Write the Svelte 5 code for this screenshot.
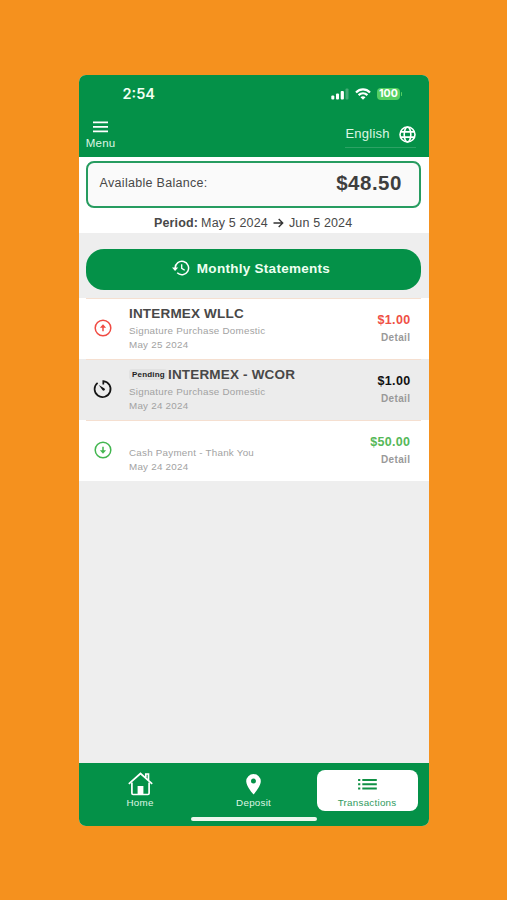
<script>
  const transactions = [
    { kind: 'debit', name: 'INTERMEX WLLC', note: 'Signature Purchase Domestic', date: 'May 25 2024', amount: '$1.00' },
    { kind: 'pending', name: 'INTERMEX - WCOR', note: 'Signature Purchase Domestic', date: 'May 24 2024', amount: '$1.00' },
    { kind: 'credit', name: '', note: 'Cash Payment - Thank You', date: 'May 24 2024', amount: '$50.00' }
  ];
</script>

<div class="stage">
  <main class="phone">
    <header>
      <div class="status">
        <span class="time">2:54</span>
        <div class="indicators">
          <svg class="signal" width="19" height="12" viewBox="0 0 19 12" fill="#fff">
            <rect x="0.3" y="7.5" width="3" height="4" rx="1" />
            <rect x="5" y="5.5" width="3" height="6" rx="1" />
            <rect x="9.7" y="3" width="3.2" height="8.5" rx="1" />
            <rect x="14.5" y="0.5" width="3" height="11" rx="1" opacity=".25" />
          </svg>
          <svg class="wifi" width="16" height="12" viewBox="0 0 16 12" fill="none" stroke="#fff" stroke-width="2.2">
            <path d="M1 4.4C5 .3 11 .3 15 4.4M3.6 7.1c2.5-2.5 6.3-2.5 8.8 0" />
            <path d="M8 11.8 5.500 9.200c1.400-1.300 3.600-1.300 5 0Z" fill="#fff" stroke="none" />
          </svg>
          <span class="battery">100</span><i class="tip"></i>
        </div>
      </div>
      <div class="toolbar">
        <div class="menu">
          <svg width="15" height="12" viewBox="0 0 15 12" fill="#fff"><path d="M0 .4h15v1.800H0zM0 4.900h15v1.800H0zM0 9.400h15v1.800H0z" /></svg>
          <span>Menu</span>
        </div>
        <div class="language">
          <span>English</span>
          <svg width="17" height="17" viewBox="0 0 17 17" fill="none" stroke="#fff" stroke-width="1.600">
            <circle cx="8.500" cy="8.500" r="7.500" />
            <ellipse cx="8.500" cy="8.500" rx="3.300" ry="7.500" />
            <path d="M1.600 5.900h13.800M1.600 11.100h13.800" />
          </svg>
        </div>
      </div>
    </header>

    <section class="summary">
      <div class="balance"><span>Available Balance:</span><strong>$48.50</strong></div>
      <div class="period">
        <b>Period:</b><span class="from">May 5 2024</span>
        <svg width="11" height="10" viewBox="0 0 11 10" fill="none" stroke="#333" stroke-width="1.400"><path d="M.5 5h9M5.700 1l4 4-4 4" /></svg>
        <span class="to">Jun 5 2024</span>
      </div>
    </section>

    <button class="statements">
      <svg width="18" height="16" viewBox="0 0 18 16" fill="none" stroke="#fff" stroke-width="1.500">
        <path d="M3.200 8a6.700 6.700 0 1 1 2 4.800" />
        <path d="M0 7.600h6.200L3.100 10.900Z" fill="#fff" stroke="none" />
        <path d="M9.700 4.300v4.100l3 1.900" stroke-width="1.300" />
      </svg>
      Monthly Statements
    </button>

    <section class="list">
      {#each transactions as t}
        <article class={t.kind}>
          <div class="icon">
            {#if t.kind === 'pending'}
              <svg width="20" height="20" viewBox="0 0 20 20" fill="none" stroke="#151515" stroke-width="1.700">
                <path d="M10.300 5.400V2.100a8 8 0 1 1-5.700 1.700" />
                <path d="M5.800 5.900 11.500 9.400a1.300 1.300 0 0 1-1.900 1.900Z" fill="#111" stroke="none" />
              </svg>
            {:else}
              <svg width="18" height="18" viewBox="0 0 18 18" fill="none" stroke="currentColor" stroke-width="1.500">
                <circle cx="9" cy="9" r="7.800" />
                {#if t.kind === 'debit'}
                  <path d="M9 12.200V7" /><path d="M5.900 8.800 9 5.300l3.100 3.500Z" fill="currentColor" stroke="none" />
                {:else}
                  <path d="M9 5.700V11" /><path d="M5.900 9.200 9 12.700l3.100-3.500Z" fill="currentColor" stroke="none" />
                {/if}
              </svg>
            {/if}
          </div>
          <div class="description">
            <h2>{#if t.kind === 'pending'}<span class="tag">Pending</span>{/if}{t.name}</h2>
            <p>{t.note}</p>
            <p>{t.date}</p>
          </div>
          <div class="value"><strong>{t.amount}</strong><span>Detail</span></div>
        </article>
      {/each}
    </section>

    <footer>
      <nav>
        <div class="tab">
          <svg width="25" height="24" viewBox="0 0 25 24" fill="none" stroke="#fff" stroke-width="1.700">
            <path d="M.8 11.900 12.500 1.500l11.700 10.400" />
            <path d="M17.800 5.500V2h2.700v6" />
            <path d="M3.900 10.500v10.800q0 1.200 1.200 1.200h14.800q1.200 0 1.200-1.200V10.500" />
            <path d="M9.600 22.500v-8.400h5.800v8.400Z" fill="#fff" stroke="none" />
          </svg>
          <span>Home</span>
        </div>
        <div class="tab">
          <svg width="25" height="24" viewBox="0 0 25 24"><path fill="#fff" fill-rule="evenodd" d="M12.500 2a7.300 7.300 0 0 0-7.300 7.300c0 5.200 7.300 13.200 7.300 13.200s7.300-8 7.300-13.200A7.300 7.300 0 0 0 12.500 2Zm0 4.600a2.500 2.500 0 1 1 0 5 2.500 2.500 0 0 1 0-5Z" /></svg>
          <span>Deposit</span>
        </div>
        <div class="tab active">
          <svg width="25" height="24" viewBox="0 0 25 24" fill="#109044"><path d="M3.100 7h2.200v2H3.100zM7.300 7h14.500v2H7.300zM3.100 11.200h2.200v2H3.100zM7.300 11.200h14.500v2H7.300zM3.100 15.400h2.200v2H3.100zM7.300 15.400h14.500v2H7.300z" /></svg>
          <span>Transactions</span>
        </div>
      </nav>
      <div class="handle"></div>
    </footer>
  </main>
</div>

<style>
  :global(body) { background: #f5911e; }
  * { box-sizing: border-box; }
  .stage {
    width: 507px; height: 900px; padding: 74.600px 0 0 78.600px; background: #f5911e;
    font-family: "Liberation Sans", Arial, sans-serif; color: #484848;
  }
  .phone {
    width: 350.800px; height: 751.700px; display: flex; flex-direction: column;
    background: #eee; border-radius: 7px; overflow: hidden;
  }
  svg { display: block; flex: none; }
  header { height: 82px; flex: none; background: #049148; color: #fff; }
  .status { height: 38px; display: flex; justify-content: space-between; padding: 0 27.500px 0 43.900px; align-items: center; }
  .time { font: 600 14.500px Inter, sans-serif; color: #f1fff3; }
  .indicators { display: flex; align-items: center; }
  .wifi { margin-left: 5px; }
  .battery {
    margin-left: 6px; width: 23px; height: 12px; border-radius: 4px; background: #55cf62;
    font: 700 10.500px/12px Inter, sans-serif; text-align: center;
  }
  .tip { width: 1px; height: 4px; margin-left: 1px; background: #55cf62; border-radius: 1px; }
  .toolbar { height: 44px; display: flex; justify-content: space-between; padding: 0 13px 0 7px; }
  .menu { width: 30px; padding-top: 8px; display: flex; flex-direction: column; align-items: center; }
  .menu span { font-size: 11.500px; line-height: 13px; letter-spacing: .2px; margin-top: 4px; color: #def6e4; }
  .language { width: 71px; height: 35px; padding-top: 9px; border-bottom: 1px solid #2da265; display: flex; justify-content: space-between; align-items: center; }
  .language span { font-size: 13px; letter-spacing: .25px; margin-top: -2px; color: #def6e4; }
  .summary { height: 76px; flex: none; background: #fff; padding: 4px 8px 0 7px; }
  .balance {
    height: 47px; border: 2px solid #279c60; border-radius: 8px; background: #fafafa;
    display: flex; align-items: center; justify-content: space-between; padding: 0 17.500px 2px 12px;
    font-size: 12.500px; letter-spacing: .3px;
  }
  .balance span { margin-top: -1px; }
  .balance strong { font-size: 20.500px; letter-spacing: .5px; color: #3e3e3e; }
  .period { display: flex; align-items: center; padding: 8px 0 0 68.400px; font-size: 12.500px; line-height: 15px; letter-spacing: .15px; white-space: nowrap; }
  .from { margin: 0 5px 0 3px; }
  .to { margin-left: 5px; }
  .statements {
    flex: none; height: 41px; margin: 16px 8px 0 7px; padding: 0 5px 2px 0; border: 0; border-radius: 18px;
    background: #049148; color: #edfff1; display: flex; align-items: center; justify-content: center; gap: 7px;
    font: bold 13.500px "Liberation Sans", Arial, sans-serif; letter-spacing: .28px;
  }
  .list { margin-top: 8px; flex: none; }
  article { height: 61.100px; display: flex; background: linear-gradient(#f5dfd0, #f5dfd0) 7px 0 / 335px 1px no-repeat #fff; }
  article.pending { background-color: #ececec; }
  .icon { width: 50.400px; display: flex; align-items: center; justify-content: center; padding-right: 1px; }
  .debit .icon { color: #f04b43; }
  .credit .icon { color: #43b650; }
  .description { flex: 1; padding-top: 8px; }
  h2 { margin: 0 0 2px; height: 16px; font-size: 13.500px; line-height: 16px; letter-spacing: .18px; color: #484848; display: flex; align-items: center; }
  .tag { font-size: 8px; line-height: 11px; letter-spacing: .2px; color: #222; background: #e2e2e2; border-radius: 3px; padding: 0 2px 0 3px; margin-right: 1px; }
  p { margin: 0; font-size: 9.800px; line-height: 14px; letter-spacing: .25px; color: #a2a2a2; }
  .value { padding: 14px 19px 0 0; display: flex; flex-direction: column; align-items: flex-end; }
  .value strong { font-size: 12.500px; line-height: 16px; letter-spacing: .3px; color: #111; }
  .value span { font-size: 10px; line-height: 12px; letter-spacing: .35px; font-weight: bold; color: #999; margin-top: 4px; }
  .debit .value strong { color: #ef5045; }
  .credit .value strong { color: #55b858; }
  footer { margin-top: auto; height: 63.500px; flex: none; background: #049148; padding-top: 7px; }
  nav { display: flex; padding: 0 11px; }
  .tab { flex: 0 0 101px; height: 41px; margin-right: 12.500px; display: flex; flex-direction: column; align-items: center; border-radius: 8px; color: #def6e4; padding-top: 2px; }
  .tab:last-child { margin-right: 0; }
  .tab span { font-size: 9.800px; line-height: 12px; letter-spacing: .25px; margin-top: 1px; }
  .tab.active { background: #fff; color: #309b60; }
  .handle { width: 126px; height: 4px; border-radius: 2px; background: #edf7ee; margin: 6px auto 0; }
</style>
